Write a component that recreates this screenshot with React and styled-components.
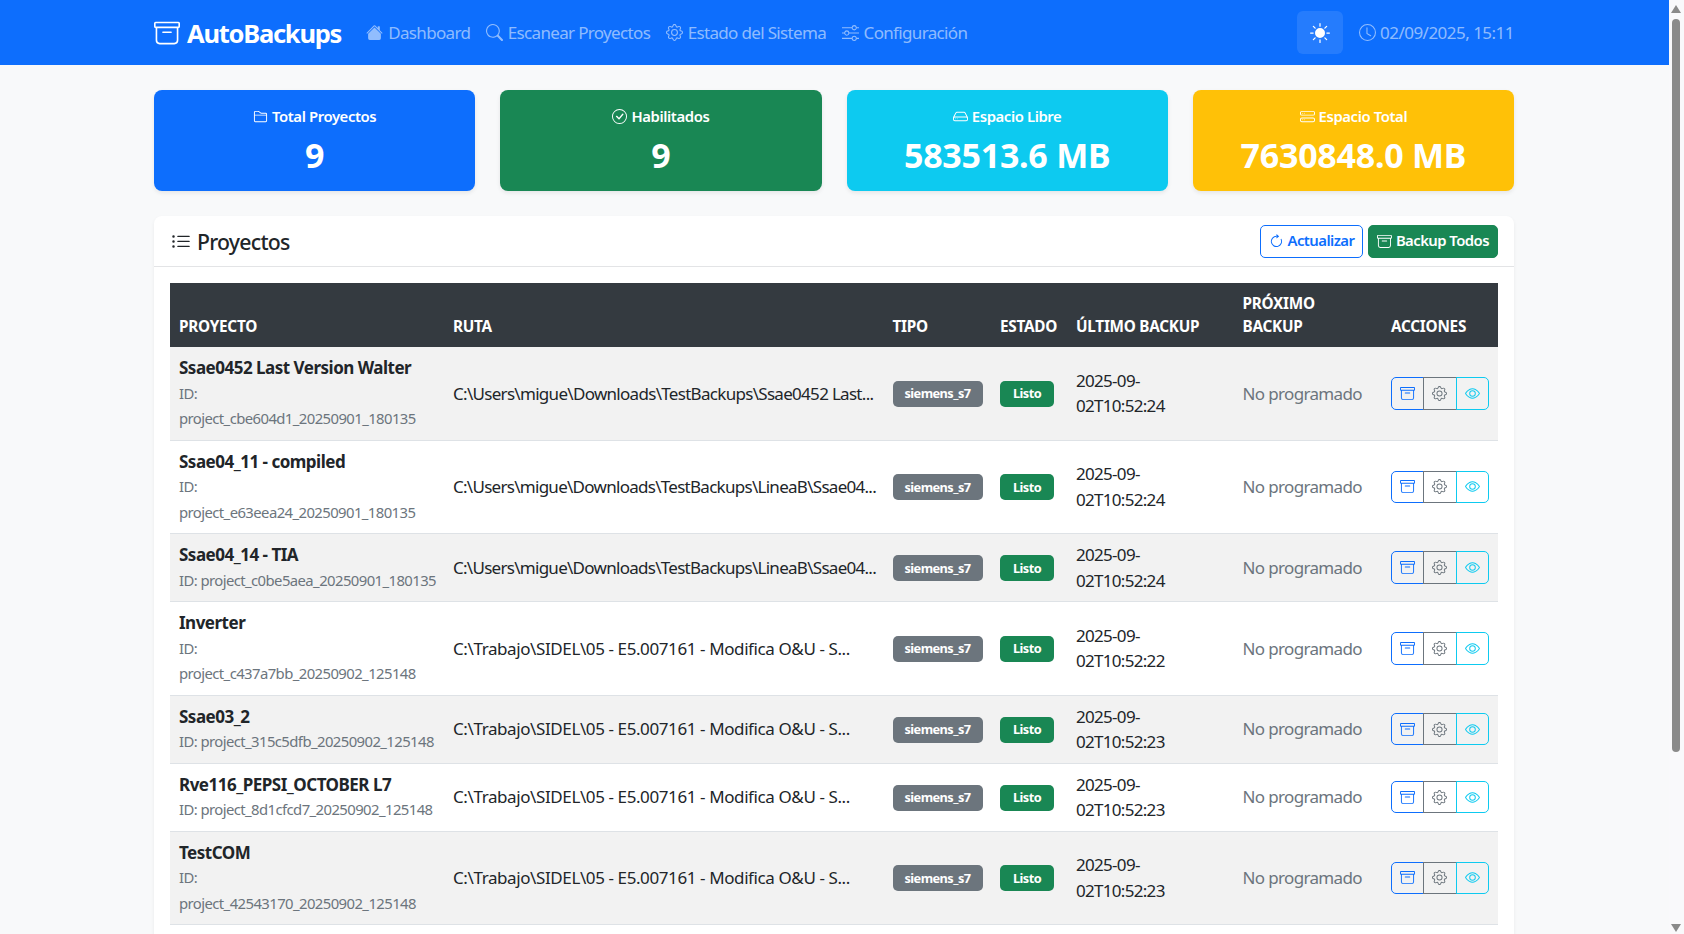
import React from "react";
import styled, { createGlobalStyle } from "styled-components";
import {
  BsArchive, BsHouseFill, BsSearch, BsGear, BsSliders, BsSunFill, BsClock,
  BsFolder2, BsCheckCircle, BsHdd, BsHddStack, BsListUl, BsArrowClockwise, BsEye,
} from "react-icons/bs";

const FONT = `"Noto Sans", "Open Sans", "Liberation Sans", sans-serif`;

const Global = createGlobalStyle`
  html, body { margin: 0; height: 100%; overflow: hidden; background: #f8f9fa; }
  body { font-family: ${FONT}; font-size: 17px; line-height: 1.5; color: #212529; }
  * { box-sizing: border-box; }
`;

const Page = styled.div`
  width: 1669px;
  height: 934px;
  overflow: hidden;
  background: #f8f9fa;
`;

const Navbar = styled.nav`
  height: 65px;
  background: #0d6efd;
  padding: 0 155px 0 154px;
  display: flex;
  align-items: center;
`;

const Brand = styled.div`
  display: flex;
  align-items: center;
  gap: 7px;
  color: #fff;
  font-size: 25.5px;
  font-weight: 700;
  letter-spacing: -1.25px;
  margin-right: 25px;
  margin-top: 2px;
  svg { font-size: 26px; margin-top: -2px; }
`;

const NavList = styled.div`
  display: flex;
  align-items: center;
  gap: 15.5px;
`;

const NavLink = styled.a`
  display: flex;
  align-items: center;
  gap: 5px;
  color: rgba(255, 255, 255, 0.55);
  font-size: 17px;
  letter-spacing: -0.66px;
  white-space: nowrap;
  svg { font-size: 17px; }
`;

const NavRight = styled.div`
  margin-left: auto;
  display: flex;
  align-items: center;
  gap: 16px;
`;

const ThemeButton = styled.button`
  width: 46px;
  height: 43px;
  border: 0;
  border-radius: 6px;
  background: rgba(255, 255, 255, 0.1);
  color: #fff;
  display: flex;
  align-items: center;
  justify-content: center;
  font-size: 20px;
  padding: 0;
`;

const Clock = styled.div`
  display: flex;
  align-items: center;
  gap: 4px;
  color: rgba(255, 255, 255, 0.55);
  font-size: 17px;
  letter-spacing: -0.52px;
  white-space: nowrap;
`;

const Main = styled.main`
  width: 1360px;
  margin: 25px 0 0 154px;
`;

const Stats = styled.section`
  display: grid;
  grid-template-columns: repeat(4, 1fr);
  gap: 25px;
  margin-bottom: 25px;
`;

const StatCard = styled.div`
  height: 101px;
  border-radius: 8px;
  padding: 17px;
  background: ${(p) => p.$bg};
  color: #fff;
  text-align: center;
  box-shadow: 0 2px 4px rgba(0, 0, 0, 0.08);
`;

const StatTitle = styled.div`
  display: flex;
  align-items: center;
  justify-content: center;
  gap: 4px;
  font-size: 14.875px;
  line-height: 18px;
  font-weight: 600;
  letter-spacing: -0.4px;
  margin-bottom: 10px;
  svg { font-size: 15px; }
`;

const StatValue = styled.div`
  font-size: 34px;
  line-height: 41px;
  font-weight: 700;
  letter-spacing: -0.26px;
`;

const ProjectCard = styled.section`
  background: #fff;
  border-radius: 8px;
  box-shadow: 0 2px 4px rgba(0, 0, 0, 0.06);
  height: 760px;
`;

const CardHeader = styled.header`
  height: 51px;
  border-bottom: 1px solid #e3e4e6;
  padding: 0 16px 0 17px;
  display: flex;
  align-items: center;
  justify-content: space-between;
`;

const CardTitle = styled.h2`
  display: flex;
  align-items: center;
  gap: 6px;
  margin: 2px 0 0;
  font-size: 21.25px;
  font-weight: 500;
  letter-spacing: -0.75px;
  svg { font-size: 20px; margin-top: -1px; }
`;

const HeaderActions = styled.div`
  display: flex;
  gap: 5px;
`;

const HeaderButton = styled.button`
  height: 33px;
  width: ${(p) => p.$w}px;
  border-radius: 5px;
  font-family: ${FONT};
  font-size: 14.875px;
  font-weight: 600;
  line-height: 20px;
  letter-spacing: -0.55px;
  display: flex;
  align-items: center;
  justify-content: center;
  gap: 4px;
  padding: 0 0 2px;
  border: 1px solid ${(p) => p.$color};
  color: ${(p) => (p.$solid ? "#fff" : p.$color)};
  background: ${(p) => (p.$solid ? p.$color : "#fff")};
  svg { margin-top: 2px; }
`;

const CardBody = styled.div`
  padding: 16px;
`;

const Table = styled.table`
  width: 1328px;
  table-layout: fixed;
  border-collapse: collapse;
`;

const Th = styled.th`
  background: #343a40;
  color: #fff;
  font-size: 15.3px;
  line-height: 22.5px;
  font-weight: 700;
  letter-spacing: -0.25px;
  text-transform: uppercase;
  text-align: left;
  vertical-align: bottom;
  padding: 9px 8.5px;
  border-bottom: 1px solid #343a40;
  &:first-child { padding-left: 9px; }
`;

const Tr = styled.tr`
  background: ${(p) => (p.$odd ? "#f2f2f2" : "#fff")};
  border-bottom: 1px solid #dee2e6;
`;

const Td = styled.td`
  padding: 8px 8.5px;
  line-height: 25.5px;
  vertical-align: middle;
  white-space: ${(p) => (p.$wrap ? "normal" : "nowrap")};
  color: ${(p) => (p.$muted ? "#6c757d" : "#212529")};
  letter-spacing: ${(p) => p.$ls || "-0.4px"};
  &:first-child { padding-left: 9px; }
`;

const ProjectName = styled.div`
  font-weight: 700;
  letter-spacing: -0.5px;
`;

const ProjectId = styled.div`
  font-size: 14.875px;
  color: #6c757d;
  letter-spacing: -0.58px;
`;

const Badge = styled.span`
  display: inline-block;
  background: ${(p) => p.$bg};
  color: #fff;
  font-size: 12.75px;
  line-height: 15px;
  font-weight: 700;
  letter-spacing: -0.55px;
  padding: 5.5px 0;
  width: ${(p) => p.$w}px;
  text-align: center;
  border-radius: 5px;
  vertical-align: middle;
`;

const BtnGroup = styled.div`
  display: flex;
  width: 98px;
  height: 32.5px;
`;

const ActionBtn = styled.button`
  flex: 1;
  padding: 0;
  margin-left: -1px;
  background: transparent;
  border: 1px solid ${(p) => p.$color};
  color: ${(p) => p.$color};
  display: flex;
  align-items: center;
  justify-content: center;
  font-size: 15px;
  &:first-child { margin-left: 0; border-radius: 5px 0 0 5px; }
  &:last-child { border-radius: 0 5px 5px 0; }
`;

const ScrollTrack = styled.div`
  position: fixed;
  top: 0;
  right: 0;
  bottom: 0;
  width: 15px;
  background: #f9f9fb;
`;

const ScrollThumb = styled.div`
  position: absolute;
  top: 19px;
  left: 3px;
  width: 8px;
  height: 733px;
  border-radius: 4px;
  background: #8a8a8a;
`;

const ScrollArrow = styled.svg`
  position: absolute;
  left: 2px;
  width: 10px;
  height: 8px;
  fill: #8a8a8a;
  ${(p) => (p.$down ? "bottom: 2px;" : "top: 5px;")}
`;

const stats = [
  { bg: "#0d6efd", icon: <BsFolder2 />, title: "Total Proyectos", value: "9" },
  { bg: "#198754", icon: <BsCheckCircle />, title: "Habilitados", value: "9" },
  { bg: "#0dcaf0", icon: <BsHdd />, title: "Espacio Libre", value: "583513.6 MB" },
  { bg: "#ffc107", icon: <BsHddStack />, title: "Espacio Total", value: "7630848.0 MB" },
];

const columns = [
  ["Proyecto", 274.5], ["Ruta", 439.5], ["Tipo", 107.5], ["Estado", 76],
  ["Último Backup", 166.5], ["Próximo Backup", 148.5], ["Acciones", 115.5],
];

const TRABAJO = "C:\\Trabajo\\SIDEL\\05 - E5.007161 - Modifica O&U - S...";
const LINEAB = "C:\\Users\\migue\\Downloads\\TestBackups\\LineaB\\Ssae04...";

const rows = [
  { name: "Ssae0452 Last Version Walter", id: "project_cbe604d1_20250901_180135", split: true, path: "C:\\Users\\migue\\Downloads\\TestBackups\\Ssae0452 Last...", pathLs: "-0.7px", date: "2025-09-02T10:52:24" },
  { name: "Ssae04_11 - compiled", id: "project_e63eea24_20250901_180135", split: true, path: LINEAB, pathLs: "-0.72px", date: "2025-09-02T10:52:24" },
  { name: "Ssae04_14 - TIA", id: "project_c0be5aea_20250901_180135", path: LINEAB, pathLs: "-0.72px", date: "2025-09-02T10:52:24" },
  { name: "Inverter", id: "project_c437a7bb_20250902_125148", split: true, path: TRABAJO, date: "2025-09-02T10:52:22" },
  { name: "Ssae03_2", id: "project_315c5dfb_20250902_125148", path: TRABAJO, date: "2025-09-02T10:52:23" },
  { name: "Rve116_PEPSI_OCTOBER L7", id: "project_8d1cfcd7_20250902_125148", path: TRABAJO, date: "2025-09-02T10:52:23" },
  { name: "TestCOM", id: "project_42543170_20250902_125148", split: true, path: TRABAJO, date: "2025-09-02T10:52:23" },
];

export default function App() {
  return (
    <Page>
      <Global />
      <Navbar>
        <Brand><BsArchive />AutoBackups</Brand>
        <NavList>
          <NavLink><BsHouseFill />Dashboard</NavLink>
          <NavLink><BsSearch />Escanear Proyectos</NavLink>
          <NavLink><BsGear />Estado del Sistema</NavLink>
          <NavLink><BsSliders />Configuración</NavLink>
        </NavList>
        <NavRight>
          <ThemeButton aria-label="Tema"><BsSunFill /></ThemeButton>
          <Clock><BsClock />02/09/2025, 15:11</Clock>
        </NavRight>
      </Navbar>
      <Main>
        <Stats>
          {stats.map((s) => (
            <StatCard key={s.title} $bg={s.bg}>
              <StatTitle>{s.icon}{s.title}</StatTitle>
              <StatValue>{s.value}</StatValue>
            </StatCard>
          ))}
        </Stats>
        <ProjectCard>
          <CardHeader>
            <CardTitle><BsListUl />Proyectos</CardTitle>
            <HeaderActions>
              <HeaderButton $color="#0d6efd" $w={103}><BsArrowClockwise />Actualizar</HeaderButton>
              <HeaderButton $color="#198754" $w={130} $solid><BsArchive />Backup Todos</HeaderButton>
            </HeaderActions>
          </CardHeader>
          <CardBody>
            <Table>
              <colgroup>
                {columns.map(([label, w]) => <col key={label} width={w} />)}
              </colgroup>
              <thead>
                <tr>{columns.map(([label]) => <Th key={label}>{label}</Th>)}</tr>
              </thead>
              <tbody>
                {rows.map((r, i) => (
                  <Tr key={r.id} $odd={i % 2 === 0}>
                    <Td>
                      <ProjectName>{r.name}</ProjectName>
                      {r.split ? (
                        <ProjectId>ID:<br />{r.id}</ProjectId>
                      ) : (
                        <ProjectId>ID: {r.id}</ProjectId>
                      )}
                    </Td>
                    <Td $ls={r.pathLs}>{r.path}</Td>
                    <Td><Badge $bg="#6c757d" $w={90}>siemens_s7</Badge></Td>
                    <Td><Badge $bg="#198754" $w={54}>Listo</Badge></Td>
                    <Td $wrap $ls="-0.7px">{r.date.slice(0, 8)}<br />{r.date.slice(8)}</Td>
                    <Td $muted $ls="-0.65px">No programado</Td>
                    <Td>
                      <BtnGroup>
                        <ActionBtn $color="#0d6efd" aria-label="Backup"><BsArchive /></ActionBtn>
                        <ActionBtn $color="#6c757d" aria-label="Configurar"><BsGear /></ActionBtn>
                        <ActionBtn $color="#0dcaf0" aria-label="Ver"><BsEye /></ActionBtn>
                      </BtnGroup>
                    </Td>
                  </Tr>
                ))}
              </tbody>
            </Table>
          </CardBody>
        </ProjectCard>
      </Main>
      <ScrollTrack>
        <ScrollArrow viewBox="0 0 10 8"><path d="M5 0 L10 8 L0 8 Z" /></ScrollArrow>
        <ScrollThumb />
        <ScrollArrow $down viewBox="0 0 10 8"><path d="M0 0 L10 0 L5 8 Z" /></ScrollArrow>
      </ScrollTrack>
    </Page>
  );
}
